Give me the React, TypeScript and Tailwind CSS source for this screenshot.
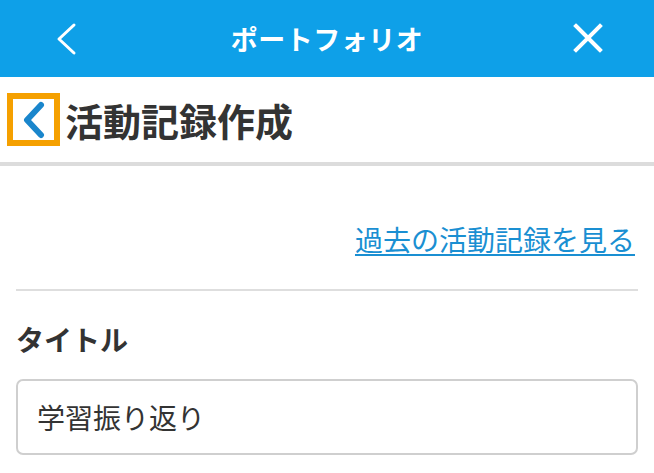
import React from "react";

export default function App() {
  const font = { fontFamily: '"Noto Sans CJK JP", "Noto Sans", sans-serif' };
  return (
    <div className="w-[654px] h-[473px] bg-white overflow-hidden" style={font}>
      <header className="relative h-[77px] bg-[#0ea0e8] flex items-center justify-center">
        <svg className="absolute left-[54px] top-[22px]" width="26" height="34" viewBox="0 0 26 34">
          <polyline points="20,3 5,17 20,31" fill="none" stroke="white" strokeWidth="3" strokeLinecap="round" strokeLinejoin="round" />
        </svg>
        <h1 className="text-white font-bold text-[27px] leading-none tracking-[0.5px]">ポートフォリオ</h1>
        <svg className="absolute left-[572px] top-[22px]" width="32" height="32" viewBox="0 0 32 32">
          <path d="M4 4 L28 28 M28 4 L4 28" stroke="white" strokeWidth="4" strokeLinecap="square" />
        </svg>
      </header>
      <div className="h-[89px] flex items-center pl-[7px] gap-[5px] border-b-4 border-[#dcdcdc]">
        <div className="w-[53px] h-[53px] border-[6px] border-[#f5a000] bg-white flex items-center justify-center">
          <svg width="30" height="38" viewBox="0 0 30 38">
            <polyline points="22,4 8,19 22,34" fill="none" stroke="#1a86cc" strokeWidth="6" strokeLinecap="round" strokeLinejoin="round" />
          </svg>
        </div>
        <h2 className="text-[38px] font-bold text-[#333333] leading-none">活動記録作成</h2>
      </div>
      <div className="px-[16px]">
        <div className="flex justify-end pt-[56px] pr-[3px]">
          <a className="text-[28px] leading-[34px] text-[#1a8fd2] underline underline-offset-[3px] decoration-2">過去の活動記録を見る</a>
        </div>
        <div className="mt-[33px] h-[2px] bg-[#dedede]" />
        <div className="mt-[31px] text-[28px] font-bold text-[#333333] leading-[34px]">タイトル</div>
        <div className="mt-[23px] h-[76px] border-2 border-[#cfcfcf] rounded-[7px] flex items-center pl-[19px]">
          <span className="text-[28px] text-[#333333] leading-none">学習振り返り</span>
        </div>
      </div>
    </div>
  );
}
